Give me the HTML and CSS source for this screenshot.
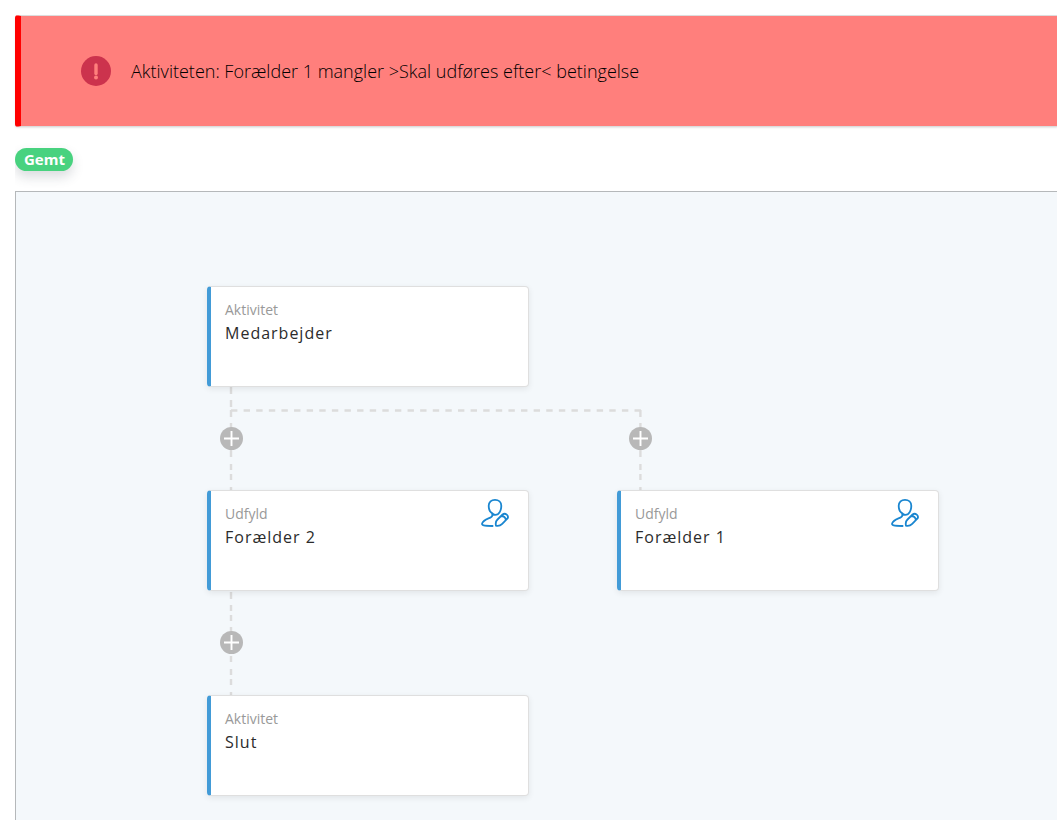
FILE: index.html
```
<!DOCTYPE html>
<html lang="da">
<head>
<meta charset="utf-8">
<meta name="viewport" content="width=device-width, initial-scale=1">
<title>Aktiviteter</title>
<link rel="stylesheet" href="styles.css">
</head>
<body>
<svg class="defs" aria-hidden="true">
  <symbol id="plus" viewBox="0 0 23 23">
    <circle cx="11.5" cy="11.5" r="11.5" fill="#b8b8b8"/>
    <path d="M4 11.5h15M11.5 4v15" stroke="#fff" stroke-width="1.9"/>
  </symbol>
  <symbol id="user-edit" viewBox="0 0 30 30">
    <g fill="none" stroke="#1a86d0" stroke-width="1.8" stroke-linecap="round" stroke-linejoin="round">
      <path d="M12.3 15.4C9.8 14 8.7 11.500 8.700 7.800C8.700 4 11.400 1.800 15 1.800S21.300 4 21.300 7.800C21.300 11.800 19.500 16.900 15.200 16.900C14 16.900 13 16.300 12.300 15.400V17.400C12.300 20.300 4 20.500 2.200 25.200C1.400 27.400 3.600 27.600 12.600 28"/>
      <path d="M17.500 21.500L22.600 16.500C25.200 14.300 29.500 17.800 27.300 20.700L22.200 25.900C20.500 27.600 18 28.100 16 27.700C15.400 25.400 15.700 23.200 17.500 21.500ZM21.200 18C23.500 18 25.500 19.700 25.900 22"/>
    </g>
  </symbol>
</svg>
<main class="page">
  <div class="alert" role="alert">
    <svg class="alert-icon" viewBox="0 0 30 30" aria-hidden="true">
      <circle cx="15" cy="15" r="15" fill="#cc334d"/>
      <path d="M15 9v8.500" stroke="#ff7f7c" stroke-width="3.400" stroke-linecap="round"/>
      <circle cx="15" cy="21.500" r="2" fill="#ff7f7c"/>
    </svg>
    <p class="alert-text">Aktiviteten: Forælder 1 mangler &gt;Skal udføres efter&lt; betingelse</p>
  </div>
  <div class="status"><span class="badge">Gemt</span></div>
  <section class="canvas" aria-label="Forløb">
    <svg class="links" aria-hidden="true">
      <g fill="none" stroke="#dcdcdc" stroke-width="2.4">
        <path d="M215 195v7M215 208v7M215 218v7M215 231v6M215 258v7M215 272v6M215 282v6M215 295v3"/>
        <path d="M215 400v7M215 413v6M215 423v6M215 435v6M215 464v6M215 477v6M215 487v6M215 500v3"/>
        <path d="M624.400 218v7M624.400 231v6M624.400 258v7M624.400 272v6M624.400 282v6M624.400 295v3"/>
        <path d="M215 218.500H625" stroke-dasharray="6.400 6.210"/>
      </g>
    </svg>
    <article class="node node-start">
      <p class="kind">Aktivitet</p>
      <h2 class="name">Medarbejder</h2>
    </article>
    <article class="node node-left">
      <p class="kind">Udfyld</p>
      <h2 class="name">Forælder 2</h2>
      <svg class="node-icon" aria-hidden="true"><use href="#user-edit"/></svg>
    </article>
    <article class="node node-right">
      <p class="kind">Udfyld</p>
      <h2 class="name">Forælder 1</h2>
      <svg class="node-icon" aria-hidden="true"><use href="#user-edit"/></svg>
    </article>
    <article class="node node-end">
      <p class="kind">Aktivitet</p>
      <h2 class="name">Slut</h2>
    </article>
    <button class="add add-left" type="button" aria-label="Tilføj"><svg aria-hidden="true"><use href="#plus"/></svg></button>
    <button class="add add-right" type="button" aria-label="Tilføj"><svg aria-hidden="true"><use href="#plus"/></svg></button>
    <button class="add add-end" type="button" aria-label="Tilføj"><svg aria-hidden="true"><use href="#plus"/></svg></button>
  </section>
</main>
</body>
</html>
```
FILE: styles.css
```
* { box-sizing: border-box; }

body {
  margin: 0;
  background: #fff;
  color: #2b2b2b;
  font-family: "Open Sans", "Noto Sans", sans-serif;
}

p, h2 { margin: 0; }

.defs { display: none; }

.page {
  display: flex;
  flex-direction: column;
  min-height: 100vh;
  padding: 15px 0 0 15px;
}

.alert {
  display: flex;
  align-items: center;
  gap: 20px;
  padding: 40px 60px;
  border: solid #dcdcdc;
  border-width: 1px 0 1px 6px;
  border-left-color: #f00;
  border-radius: 3px 0 0 3px;
  background: #ff7f7c;
  box-shadow: 0 1px 2px rgba(0, 0, 0, 0.1);
}

.alert-icon { flex: none; width: 30px; height: 30px; }

.alert-text {
  color: #000;
  font-size: 18px;
  font-weight: 300;
  line-height: 30px;
}

.status {
  display: flex;
  padding: 21px 0 20px;
  overflow: hidden;
}

.badge {
  padding: 0 8px 0 9px;
  border-radius: 12px;
  background: #48d27f;
  color: #fff;
  font-size: 15px;
  font-weight: 700;
  line-height: 23px;
  box-shadow: 0 6px 12px rgba(50, 60, 80, 0.18);
}

.canvas {
  position: relative;
  flex: 1;
  min-height: 628px;
  border: solid #b5b8ba;
  border-width: 1px 0 0 1px;
  background: #f4f8fb;
  overflow: hidden;
}

.links {
  position: absolute;
  inset: 0;
  width: 100%;
  height: 100%;
}

.node {
  position: absolute;
  width: 322px;
  height: 101px;
  padding: 13px 14px;
  border: 1px solid #dfdfdf;
  border-left: 4px solid #429bd7;
  border-radius: 4px;
  background: #fff;
  box-shadow: 0 2px 6px rgba(0, 0, 0, 0.08);
}

.node-start { left: 191px; top: 94px; }
.node-left { left: 191px; top: 298px; }
.node-right { left: 601px; top: 298px; }
.node-end { left: 191px; top: 503px; }

.kind { color: #999; font-size: 14px; line-height: 20px; }

.name {
  font-size: 16px;
  font-weight: 400;
  letter-spacing: 1px;
  line-height: 26px;
}

.node-icon {
  position: absolute;
  top: 7px;
  right: 18px;
  width: 30px;
  height: 30px;
}

.add {
  position: absolute;
  width: 23px;
  height: 23px;
  padding: 0;
  border: 0;
  border-radius: 50%;
  background: none;
  cursor: pointer;
}

.add svg { display: block; width: 23px; height: 23px; }

.add-left { left: 204px; top: 235px; }
.add-right { left: 613px; top: 235px; }
.add-end { left: 204px; top: 439px; }
```
